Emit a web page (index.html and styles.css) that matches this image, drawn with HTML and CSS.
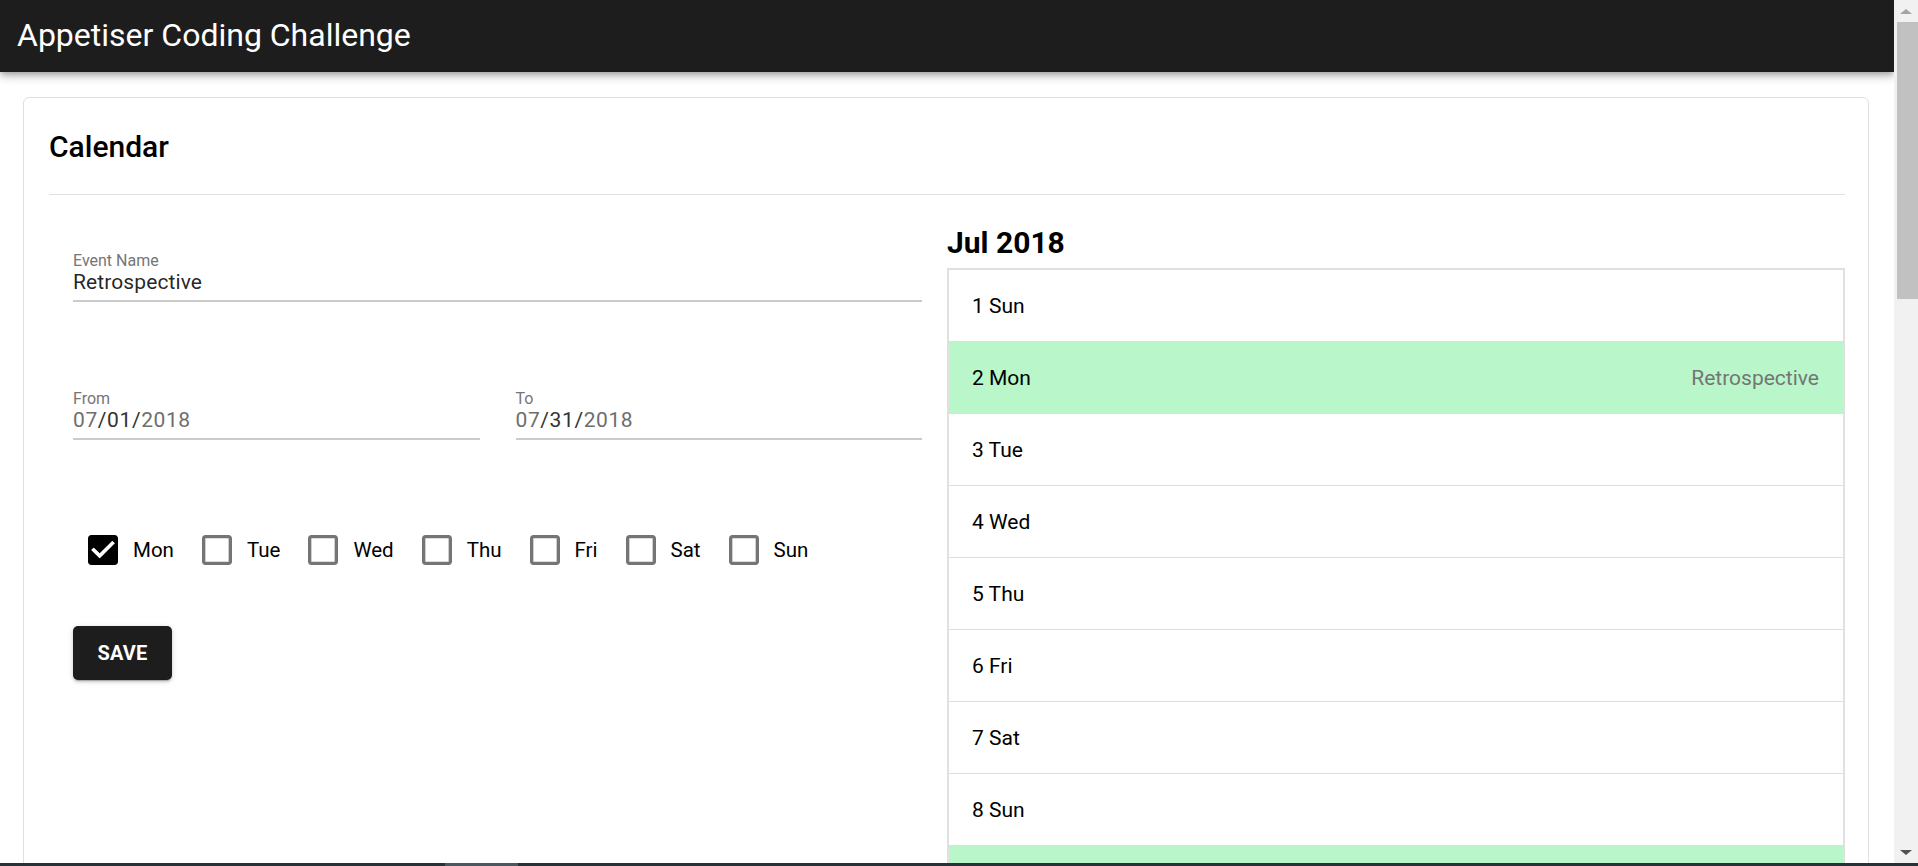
FILE: index.html
```html
<!DOCTYPE html>
<html lang="en">
<head>
<meta charset="utf-8">
<title>Appetiser Coding Challenge</title>
<link rel="stylesheet" href="styles.css">
</head>
<body>
<div class="window">
  <div class="main">
    <header class="appbar">
      <h1 class="app-title">Appetiser Coding Challenge</h1>
    </header>
    <section class="card">
      <h2 class="card-title">Calendar</h2>
      <div class="divider"></div>
      <div class="columns">
        <div class="form">
          <div class="field">
            <label class="field-label">Event Name</label>
            <div class="field-value">Retrospective</div>
          </div>
          <div class="field-row">
            <div class="field">
              <label class="field-label">From</label>
              <div class="field-value date"><span class="seg">07</span><span class="seg-on">/01/</span><span class="seg">2018</span></div>
            </div>
            <div class="field">
              <label class="field-label">To</label>
              <div class="field-value date"><span class="seg">07</span><span class="seg-on">/31/</span><span class="seg">2018</span></div>
            </div>
          </div>
          <div class="days">
            <label class="day">
              <svg class="box" viewBox="3 3 18 18"><path fill="#000" d="M19 3H5c-1.11 0-2 .9-2 2v14c0 1.1.89 2 2 2h14c1.11 0 2-.9 2-2V5c0-1.1-.89-2-2-2zm-9 14l-5-5 1.41-1.41L10 14.17l7.59-7.59L19 8l-9 9z"/><path fill="#fff" d="M10 17l-5-5 1.41-1.41L10 14.17l7.59-7.59L19 8z"/></svg>
              <span>Mon</span>
            </label>
            <label class="day">
              <svg class="box" viewBox="3 3 18 18"><path fill="#757575" d="M19 5v14H5V5h14m0-2H5c-1.1 0-2 .9-2 2v14c0 1.1.9 2 2 2h14c1.1 0 2-.9 2-2V5c0-1.1-.9-2-2-2z"/></svg>
              <span>Tue</span>
            </label>
            <label class="day">
              <svg class="box" viewBox="3 3 18 18"><path fill="#757575" d="M19 5v14H5V5h14m0-2H5c-1.1 0-2 .9-2 2v14c0 1.1.9 2 2 2h14c1.1 0 2-.9 2-2V5c0-1.1-.9-2-2-2z"/></svg>
              <span>Wed</span>
            </label>
            <label class="day">
              <svg class="box" viewBox="3 3 18 18"><path fill="#757575" d="M19 5v14H5V5h14m0-2H5c-1.1 0-2 .9-2 2v14c0 1.1.9 2 2 2h14c1.1 0 2-.9 2-2V5c0-1.1-.9-2-2-2z"/></svg>
              <span>Thu</span>
            </label>
            <label class="day">
              <svg class="box" viewBox="3 3 18 18"><path fill="#757575" d="M19 5v14H5V5h14m0-2H5c-1.1 0-2 .9-2 2v14c0 1.1.9 2 2 2h14c1.1 0 2-.9 2-2V5c0-1.1-.9-2-2-2z"/></svg>
              <span>Fri</span>
            </label>
            <label class="day">
              <svg class="box" viewBox="3 3 18 18"><path fill="#757575" d="M19 5v14H5V5h14m0-2H5c-1.1 0-2 .9-2 2v14c0 1.1.9 2 2 2h14c1.1 0 2-.9 2-2V5c0-1.1-.9-2-2-2z"/></svg>
              <span>Sat</span>
            </label>
            <label class="day">
              <svg class="box" viewBox="3 3 18 18"><path fill="#757575" d="M19 5v14H5V5h14m0-2H5c-1.1 0-2 .9-2 2v14c0 1.1.9 2 2 2h14c1.1 0 2-.9 2-2V5c0-1.1-.9-2-2-2z"/></svg>
              <span>Sun</span>
            </label>
          </div>
          <button class="save">SAVE</button>
        </div>
        <div class="calendar">
          <h3 class="month">Jul 2018</h3>
          <ul class="days-list">
            <li class="row"><span>1 Sun</span></li>
            <li class="row event"><span>2 Mon</span><span class="event-name">Retrospective</span></li>
            <li class="row"><span>3 Tue</span></li>
            <li class="row"><span>4 Wed</span></li>
            <li class="row"><span>5 Thu</span></li>
            <li class="row"><span>6 Fri</span></li>
            <li class="row"><span>7 Sat</span></li>
            <li class="row"><span>8 Sun</span></li>
            <li class="row event"><span>9 Mon</span><span class="event-name">Retrospective</span></li>
            <li class="row"><span>10 Tue</span></li>
          </ul>
        </div>
      </div>
    </section>
  </div>
  <div class="scrollbar">
    <div class="arrow-up"></div>
    <div class="thumb"></div>
    <div class="track-rest"></div>
    <div class="arrow-down"></div>
  </div>
</div>
<div class="taskbar"><div class="taskbar-seg"></div></div>
</body>
</html>
```
FILE: styles.css
```css
* { box-sizing: border-box; }
html, body { margin: 0; padding: 0; height: 100%; overflow: hidden; }
body {
  font-family: Roboto, "Liberation Sans", sans-serif;
  color: rgba(0,0,0,0.87);
  background: #fff;
  display: flex;
  flex-direction: column;
}
.window { display: flex; height: 863px; }
.main { flex: 1; overflow: hidden; }

.appbar {
  position: relative;
  z-index: 2;
  height: 72px;
  background: #1d1d1d;
  display: flex;
  align-items: center;
  padding-left: 17px;
  box-shadow: 0 3px 5px -1px rgba(0,0,0,0.2), 0 5px 8px 0 rgba(0,0,0,0.14), 0 1px 14px 0 rgba(0,0,0,0.12);
}
.app-title {
  margin: 0;
  margin-top: -3px;
  color: #fff;
  font-size: 32px;
  font-weight: 400;
  letter-spacing: 0;
}

.card {
  margin: 25px 25px 0 23px;
  border: 1px solid #e0e0e0;
  border-radius: 6px;
  padding: 31px 23px 0 25px;
}
.card-title {
  margin: 0;
  font-size: 30px;
  line-height: 36px;
  font-weight: 500;
  color: #000;
}
.divider { height: 1px; background: #e0e0e0; margin-top: 29px; }

.columns { display: grid; grid-template-columns: 898px 1fr; }

.form { padding: 56px 25px 0 24px; }
.field { display: flex; flex-direction: column; border-bottom: 2px solid #cbcbcb; padding-bottom: 6px; }
.field-label { font-size: 16px; line-height: 19px; color: #757575; }
.field-value { font-size: 21px; line-height: 24px; color: rgba(0,0,0,0.87); letter-spacing: 0.1px; }
.date { letter-spacing: 0.6px; }
.date .seg { color: #6e6e6e; }
.date .seg-on { color: #333; }
.field-row { display: grid; grid-template-columns: 1fr 1fr; column-gap: 36px; margin-top: 87px; }

.days { display: flex; align-items: center; margin-top: 95px; padding-left: 15px; }
.day { display: flex; align-items: center; gap: 15px; margin-right: 28px; font-size: 20.5px; color: #000; }
.box { width: 30px; height: 30px; display: block; }

.save {
  display: block;
  margin-top: 61px;
  width: 99px;
  height: 54px;
  border: 0;
  border-radius: 5px;
  background: #1d1d1d;
  color: #fff;
  font-family: Roboto, "Liberation Sans", sans-serif;
  font-size: 20px;
  font-weight: 700;
  letter-spacing: 0.2px;
  box-shadow: 0 3px 1px -2px rgba(0,0,0,0.2), 0 2px 3px 0 rgba(0,0,0,0.14), 0 1px 6px 0 rgba(0,0,0,0.12);
}

.calendar { padding-top: 30px; }
.month { margin: 0; font-size: 30px; line-height: 36px; font-weight: 700; color: #000; }
.days-list {
  list-style: none;
  margin: 7px 0 0;
  padding: 0;
  border: 2px solid #e0e0e0;
  border-bottom: 0;
}
.row {
  height: 72px;
  border-bottom: 1px solid #dedede;
  display: flex;
  align-items: center;
  justify-content: space-between;
  padding: 0 24px 0 23px;
  font-size: 21px;
  color: #000;
}
.row.event { background: #b9f6ca; }
.event-name { color: #757575; }

.scrollbar { width: 24px; background: #f1f1f1; display: flex; flex-direction: column; align-items: center; }
.arrow-up { height: 22px; width: 100%; display: flex; justify-content: center; align-items: center; }
.arrow-up::before { content: ""; border: 6px solid transparent; border-top: 0; border-bottom: 5px solid #a3a3a3; }
.thumb { width: 21px; margin-left: 2px; height: 277px; background: #c1c1c1; }
.track-rest { flex: 1; }
.arrow-down { height: 22px; width: 100%; display: flex; justify-content: center; align-items: center; }
.arrow-down::before { content: ""; border: 6px solid transparent; border-bottom: 0; border-top: 5px solid #505050; }

.taskbar { height: 3px; background: #263238; padding-left: 445px; }
.taskbar-seg { width: 73px; height: 3px; background: #4a575e; }
```
